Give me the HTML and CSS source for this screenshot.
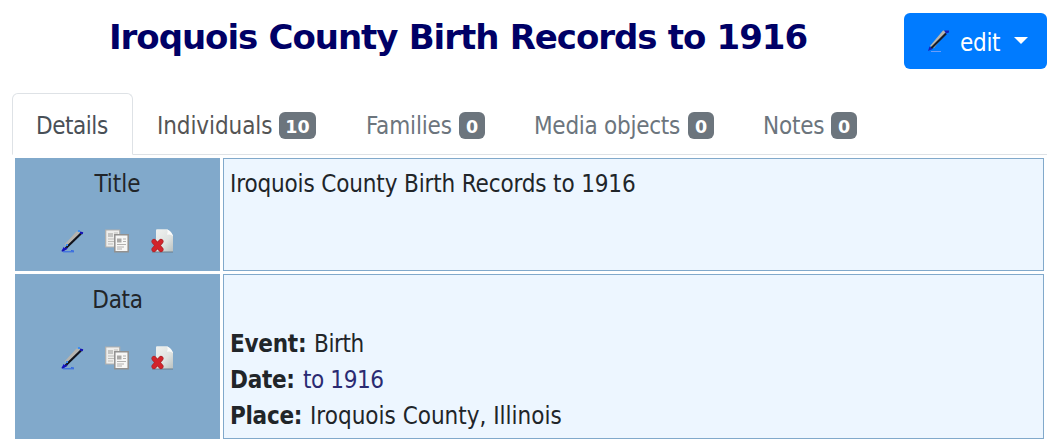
FILE: index.html
```html
<!DOCTYPE html>
<html lang="en">
<head>
<meta charset="utf-8">
<title>Iroquois County Birth Records to 1916</title>
<link rel="stylesheet" href="styles.css">
</head>
<body>
<svg class="defs" width="0" height="0" aria-hidden="true">
  <defs>
    <linearGradient id="paper" x1="0" y1="0" x2="1" y2="1"><stop offset="0" stop-color="#f2f4f2"/><stop offset=".6" stop-color="#dfe3e1"/><stop offset="1" stop-color="#b9c0bf"/></linearGradient>
    <symbol id="pen" viewBox="0 0 24 24">
      <path d="M4.500 15.500 16.500 2.500l4 1L8 18z" fill="#b5b3ae"/>
      <path d="M5.500 19.500 21 4.500" stroke="#10131c" stroke-width="2.200"/>
      <path d="m1.500 22.500 2-4.500 3 2.500z" fill="#1510d0"/>
      <path d="m2 22 5-3M20 3.500l3 .7" stroke="#1411b5" stroke-width="2"/>
      <path d="M3 22.800h11M11 21.500l3 .5" stroke="#2d62e4" stroke-width="1"/>
      <path d="M18 1h2v2h-2zM6 15h2v2H6z" fill="#3d8df0"/>
    </symbol>
    <symbol id="copy" viewBox="0 0 24 24">
      <path d="M.7 1h14v17H.7z" fill="#eeeeec" stroke="#b1b0ad" stroke-width="1.200"/>
      <path d="M3 4h5v4H3z" fill="#c4c4c2"/>
      <path d="M9 4h4M9 6.500h4M3 10h7M3 12.500h7M3 15h5" stroke="#bebdba" stroke-width="1"/>
      <path d="M9.800 5.800h13.400v17H9.800z" fill="#f7f7f6" stroke="#929190" stroke-width="1.500"/>
      <path d="M12 9.500h4.500v4H12z" fill="#aaa9a7"/>
      <path d="M18 10h3M18 12.500h3M12 15.500h9M12 18h7M12 20h5" stroke="#b3b2b0" stroke-width="1.100"/>
    </symbol>
    <symbol id="delete" viewBox="0 0 24 24">
      <path d="M5 1.500Q5 .3 6 .3h10l6 6V23H2q3-2 3-6z" fill="url(#paper)"/>
      <path d="M16 .3q1.500 3 0 5.500 4-1 6 1.500-1-5-6-7z" fill="#fafbfa"/>
      <path d="M1 23h21" stroke="#687e8e" stroke-width="1"/>
      <path d="m3 12.500 7 8m0-8-7 8" stroke="#a8262b" stroke-width="5" stroke-linecap="round"/>
      <path d="m3 12.500 7 8m0-8-7 8" stroke="#d2242b" stroke-width="3.800" stroke-linecap="round"/>
    </symbol>
  </defs>
</svg>
<div class="page">
  <header class="header">
    <h2 class="heading">Iroquois County Birth Records to 1916</h2>
    <button class="edit"><svg class="edit-icon" viewBox="0 0 24 24"><path d="M2 17 15 1.500l4 .8L6 19z" fill="#b9b6b0"/><path d="M3 19.500 18 4.500" stroke="#171c2b" stroke-width="2.200"/><path d="m0 22 1.500-4.500 3 2.500zM16 1.500h5v2l-3 1z" fill="#1520bc"/><path d="M3 22.500h10" stroke="#6c9df8" stroke-width="1"/></svg><span>edit</span><i class="caret"></i></button>
  </header>
  <nav class="tabs">
    <a class="tab active"><span class="t-details">Details</span></a>
    <a class="tab individuals"><span class="t-individuals">Individuals</span><b class="badge wide">10</b></a>
    <a class="tab families"><span class="t-families">Families</span><b class="badge">0</b></a>
    <a class="tab media"><span class="t-media">Media objects</span><b class="badge">0</b></a>
    <a class="tab notes"><span class="t-notes">Notes</span><b class="badge">0</b></a>
  </nav>
  <main class="facts">
    <div class="label"><span>Title</span><div class="icons"><svg><use href="#pen"/></svg><svg><use href="#copy"/></svg><svg><use href="#delete"/></svg></div></div>
    <div class="value"><span class="v-title">Iroquois County Birth Records to 1916</span></div>
    <div class="label data"><span class="l-data">Data</span><div class="icons"><svg><use href="#pen"/></svg><svg><use href="#copy"/></svg><svg><use href="#delete"/></svg></div></div>
    <div class="value details">
      <div><b class="k-event">Event:</b><span class="v-event">Birth</span></div>
      <div><b class="k-date">Date:</b><span class="v-date">to 1916</span></div>
      <div><b class="k-place">Place:</b><span class="v-place">Iroquois County, Illinois</span></div>
    </div>
  </main>
</div>
</body>
</html>
```
FILE: styles.css
```css
* { box-sizing: border-box; }
body { margin: 0; height: 441px; overflow: hidden; background: #fff; color: #212529; font: 24px/36px Tahoma, "DejaVu Sans Condensed", "DejaVu Sans", sans-serif; font-stretch: condensed; }
.defs { position: absolute; }
.page { width: 1035px; margin-left: 12px; }
.header { display: flex; height: 93px; padding-top: 13px; }
.heading { width: 892px; margin: 0; padding-left: 97px; color: #006; font-family: "DejaVu Sans", sans-serif; font-stretch: normal; font-size: 34px; letter-spacing: -1.04px; word-spacing: .5px; line-height: 48px; font-weight: bold; white-space: nowrap; }
.edit { display: flex; align-items: center; width: 143px; height: 56px; padding: 3px 0 0 24px; border: 0; border-radius: 6px; background: #007bff; color: #fff; font: inherit; }
.edit-icon { width: 24px; height: 24px; margin: -4px 8px 0 0; }
.edit span { letter-spacing: -.3px; }
.caret { border: 7px solid transparent; border-top-color: #fff; border-bottom: 0; margin: -4px 0 0 14px; }
.tabs { display: flex; height: 62px; border-bottom: 1px solid #dee2e6; white-space: nowrap; }
.tab { display: flex; align-items: center; height: 61px; padding: 4px 0 0 24px; color: #6c757d; }
.tab span { flex: none; }
.active { width: 121px; height: 62px; border: 1px solid #dee2e6; border-bottom-color: #fff; border-radius: 6px 6px 0 0; padding-left: 23px; background: #fff; color: #495057; }
.individuals { width: 209px; color: #555; }
.families { width: 168px; }
.media { width: 229px; }
.t-details { width: 74px; letter-spacing: -.45px; }
.t-individuals { width: 122px; letter-spacing: -.1px; }
.t-families { width: 93px; letter-spacing: -.15px; }
.t-media { width: 154px; letter-spacing: -.27px; }
.t-notes { width: 68px; letter-spacing: -.2px; }
.badge { width: 26px; height: 27px; border-radius: 6px; background: #6c757d; color: #fff; text-align: center; font-family: "DejaVu Sans", sans-serif; font-stretch: normal; font-size: 17.5px; line-height: 30px; }
.wide { width: 37px; }
.facts { display: grid; grid-template-columns: 205px 821px; grid-template-rows: 113px 165px; gap: 3px; padding: 3px; }
.label { padding-top: 8px; background: #81a9cb; text-align: center; }
.l-data { letter-spacing: -.3px; }
.icons { display: flex; gap: 21px; margin-top: 27px; padding-left: 45px; }
.icons svg { width: 24px; height: 24px; }
.icons svg:last-child { margin-left: 1px; }
.data .icons { margin-top: 28px; }
.value { border: 1px solid #81a9cb; padding: 7px 6px; background: #edf6ff; white-space: nowrap; }
.v-title { letter-spacing: -.15px; }
.details { padding-top: 51px; }
.details div { display: flex; }
.k-event { width: 84px; letter-spacing: -.25px; }
.k-date { width: 73px; letter-spacing: -.3px; }
.k-place { width: 80px; letter-spacing: -.3px; }
.v-event { letter-spacing: -.4px; }
.v-date { color: #2a2a72; letter-spacing: -.4px; }
```
